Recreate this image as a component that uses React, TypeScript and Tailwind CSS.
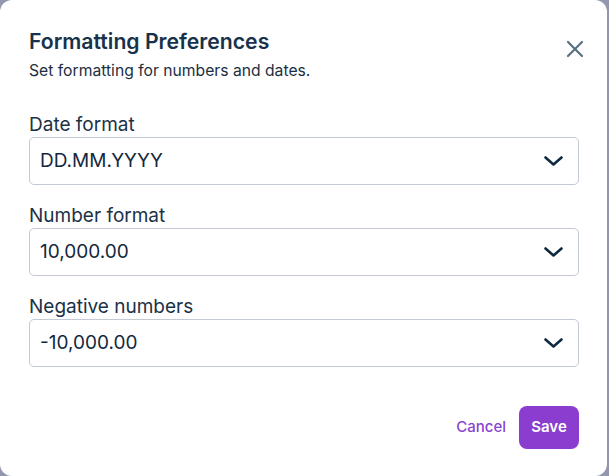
import { useState } from "react";

type Field = { label: string; value: string };

const fields: Field[] = [
  { label: "Date format", value: "DD.MM.YYYY" },
  { label: "Number format", value: "10,000.00" },
  { label: "Negative numbers", value: "-10,000.00" },
];

function Chevron() {
  return (
    <svg width="19" height="10" viewBox="0 0 19 10" fill="none" className="text-[#0f2a40]">
      <path d="M1.5 1.5 9.5 8.5 17.5 1.5" stroke="currentColor" strokeWidth="2.6" strokeLinecap="round" strokeLinejoin="round" />
    </svg>
  );
}

function CloseIcon() {
  return (
    <svg width="18" height="18" viewBox="0 0 18 18" fill="none" className="text-[#587180]">
      <path d="M2 2 16 16M16 2 2 16" stroke="currentColor" strokeWidth="2.2" strokeLinecap="round" />
    </svg>
  );
}

function SelectRow({ label, value }: Field) {
  return (
    <div className="flex flex-col">
      <label className="text-[19px] leading-[24px] text-[#1b3146]">{label}</label>
      <button
        type="button"
        className="flex h-[48px] items-center justify-between rounded-[5px] border border-[#c4cad3] bg-white pl-[10px] pr-[15px] text-left"
      >
        <span className="text-[19px] leading-[24px] text-[#14283d]">{value}</span>
        <Chevron />
      </button>
    </div>
  );
}

export default function App() {
  const [open] = useState(true);

  return (
    <div
      className="flex h-[476px] w-[609px] bg-[#9397ad]"
      style={{ fontFamily: "Inter, 'Noto Sans', sans-serif" }}
    >
      {open && (
        <div className="flex h-full w-[607px] flex-col rounded-[12px] bg-white pl-[29px] pr-[28px] pt-[27px]">
          <div className="flex items-start justify-between">
            <div>
              <h2 className="text-[21.2px] font-semibold leading-[28px] text-[#17324a]">Formatting Preferences</h2>
              <p className="mt-[6px] text-[15.7px] leading-[20px] text-[#1b2f42]">
                Set formatting for numbers and dates.
              </p>
            </div>
            <button type="button" aria-label="Close" className="mr-[-5px] mt-[13px]">
              <CloseIcon />
            </button>
          </div>

          <div className="mt-[32px] flex flex-col gap-[19px]">
            {fields.map((f) => (
              <SelectRow key={f.label} {...f} />
            ))}
          </div>

          <div className="mt-[39px] flex items-center justify-end gap-[13px]">
            <button type="button" className="text-[15px] font-medium text-[#8a44d0]">
              Cancel
            </button>
            <button
              type="button"
              className="h-[43px] w-[60px] rounded-[8px] bg-[#8a3dcf] text-[15px] font-semibold text-white"
            >
              Save
            </button>
          </div>
        </div>
      )}
    </div>
  );
}
